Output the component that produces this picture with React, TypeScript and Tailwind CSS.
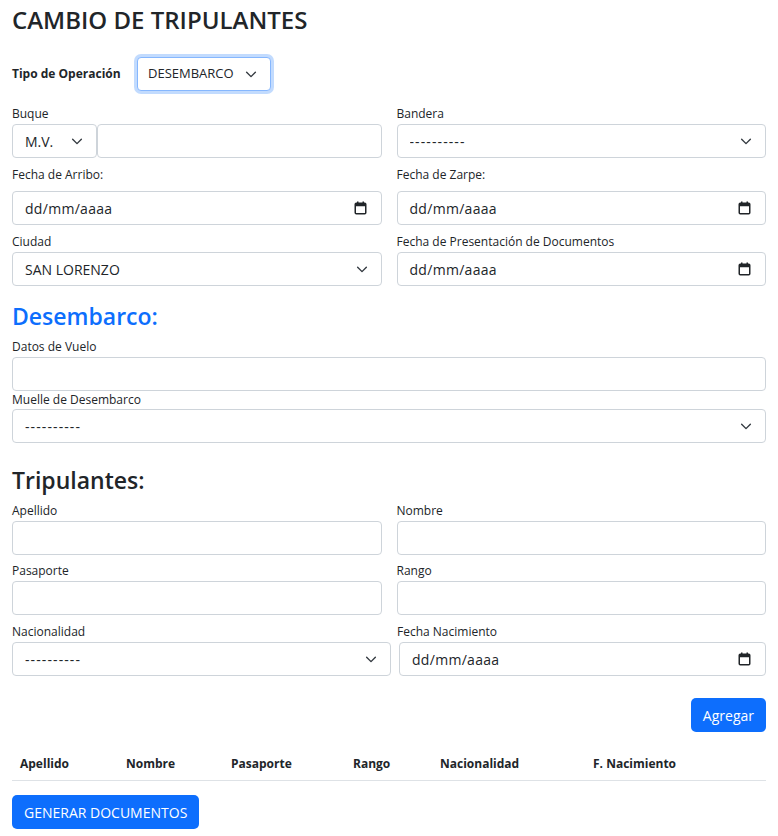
import type { ReactNode } from "react";

const Chevron = () => (
  <svg width="14" height="14" viewBox="0 0 16 16" className="pointer-events-none absolute right-[13px] top-1/2 -translate-y-1/2">
    <path d="m3 6 5 5 5-5" fill="none" stroke="#343a40" strokeWidth="1.6" strokeLinecap="round" strokeLinejoin="round" />
  </svg>
);

const CalendarIcon = () => (
  <svg width="13" height="14" viewBox="0 0 13 14">
    <rect x="1.25" y="2.25" width="10.5" height="10.5" rx="1" fill="none" stroke="#212529" strokeWidth="1.5" />
    <rect x="1.25" y="2.25" width="10.5" height="3" fill="#212529" />
    <rect x="3" y="0.5" width="1.5" height="2.5" fill="#212529" />
    <rect x="8.5" y="0.5" width="1.5" height="2.5" fill="#212529" />
  </svg>
);

const Label = ({ children, className = "" }: { children: ReactNode; className?: string }) => (
  <label className={`block text-[12px] leading-[18px] text-[#212529] ${className}`}>{children}</label>
);

const TextInput = () => (
  <input type="text" className="mt-px block h-[34px] w-full rounded-[4px] border border-[#ced4da] bg-white px-3 text-[14px] outline-none" />
);

// dashes placeholder in the original renders wider, so space them out a bit
const Select = ({ value, className = "" }: { value: string; className?: string }) => (
  <div className={`relative ${className}`}>
    <select
      className={`block h-[34px] w-full appearance-none rounded-[4px] border border-[#ced4da] bg-white pl-3 pr-9 text-[14px] text-[#212529] outline-none ${
        value.startsWith("-") ? "tracking-[1.1px]" : ""
      }`}
    >
      <option>{value}</option>
    </select>
    <Chevron />
  </div>
);

const DateField = ({ className = "" }: { className?: string }) => (
  <div className={`flex h-[34px] w-full items-center justify-between rounded-[4px] border border-[#ced4da] bg-white pl-3 pr-[14px] text-[14px] text-[#212529] ${className}`}>
    <span className="tracking-[0.3px]">dd/mm/aaaa</span>
    <CalendarIcon />
  </div>
);

export default function App() {
  return (
    <div className="min-h-[836px] bg-white px-3 pt-[5px] font-['Open_Sans',sans-serif] text-[#212529]">
      <h3 className="text-[24px] font-semibold leading-[29px]">CAMBIO DE TRIPULANTES</h3>

      <div className="mt-[23px] flex items-center">
        <span className="w-[125px] text-[12px] font-bold">Tipo de Operación</span>
        <div className="relative w-[134px]">
          <select className="block h-[34px] w-full appearance-none rounded-[4px] border border-[#86b7fe] bg-white pl-[10px] pr-8 text-[13px] text-[#212529] shadow-[0_0_0_3px_rgba(13,110,253,0.25)] outline-none">
            <option>DESEMBARCO</option>
          </select>
          <Chevron />
        </div>
      </div>

      <div className="mt-[14px] grid grid-cols-2 gap-x-[15px]">
        <div>
          <Label>Buque</Label>
          <div className="mt-px flex">
            <Select value="M.V." className="w-[85px]" />
            <input type="text" className="block h-[34px] flex-1 rounded-[4px] border border-[#ced4da] bg-white px-3 text-[14px] outline-none" />
          </div>
        </div>
        <div>
          <Label>Bandera</Label>
          <Select value="----------" className="mt-px" />
        </div>

        <div className="mt-2">
          <Label className="mb-[7px]">Fecha de Arribo:</Label>
          <DateField />
        </div>
        <div className="mt-2">
          <Label className="mb-[7px]">Fecha de Zarpe:</Label>
          <DateField />
        </div>

        <div className="mt-2">
          <Label>Ciudad</Label>
          <Select value="SAN LORENZO" className="mt-px" />
        </div>
        <div className="mt-2">
          <Label>Fecha de Presentación de Documentos</Label>
          <DateField className="mt-px" />
        </div>
      </div>

      <h3 className="mt-4 text-[23px] font-semibold leading-[29px] text-[#0d6efd]">Desembarco:</h3>
      <div className="mt-[7px]">
        <Label>Datos de Vuelo</Label>
        <TextInput />
      </div>
      <div>
        <Label>Muelle de Desembarco</Label>
        <Select value="----------" />
      </div>

      <h3 className="mt-[23px] text-[23px] font-semibold leading-[29px]">Tripulantes:</h3>
      <div className="mt-[7px] grid grid-cols-2 gap-x-[15px]">
        <div>
          <Label>Apellido</Label>
          <TextInput />
        </div>
        <div>
          <Label>Nombre</Label>
          <TextInput />
        </div>
        <div className="mt-[7px]">
          <Label>Pasaporte</Label>
          <TextInput />
        </div>
        <div className="mt-[7px]">
          <Label>Rango</Label>
          <TextInput />
        </div>
      </div>
      <div className="mt-2 grid grid-cols-[379px_1fr] gap-x-2">
        <div>
          <Label>Nacionalidad</Label>
          <Select value="----------" className="mt-px" />
        </div>
        <div>
          <Label className="-ml-[2px]">Fecha Nacimiento</Label>
          <DateField className="mt-px" />
        </div>
      </div>

      <div className="mt-[22px] flex justify-end">
        <button className="h-[34px] rounded-[5px] bg-[#0d6efd] px-3 text-[14px] text-white">Agregar</button>
      </div>

      <div className="mt-[15px] grid grid-cols-[106px_105px_122px_87px_153px_1fr] border-b border-[#dee2e6] text-[12px] font-bold">
        {["Apellido", "Nombre", "Pasaporte", "Rango", "Nacionalidad", "F. Nacimiento"].map((h) => (
          <div key={h} className="px-2 py-2 leading-[17px]">{h}</div>
        ))}
      </div>

      <button className="mt-[14px] h-[34px] rounded-[5px] bg-[#0d6efd] px-3 text-[14px] text-white">GENERAR DOCUMENTOS</button>
    </div>
  );
}
